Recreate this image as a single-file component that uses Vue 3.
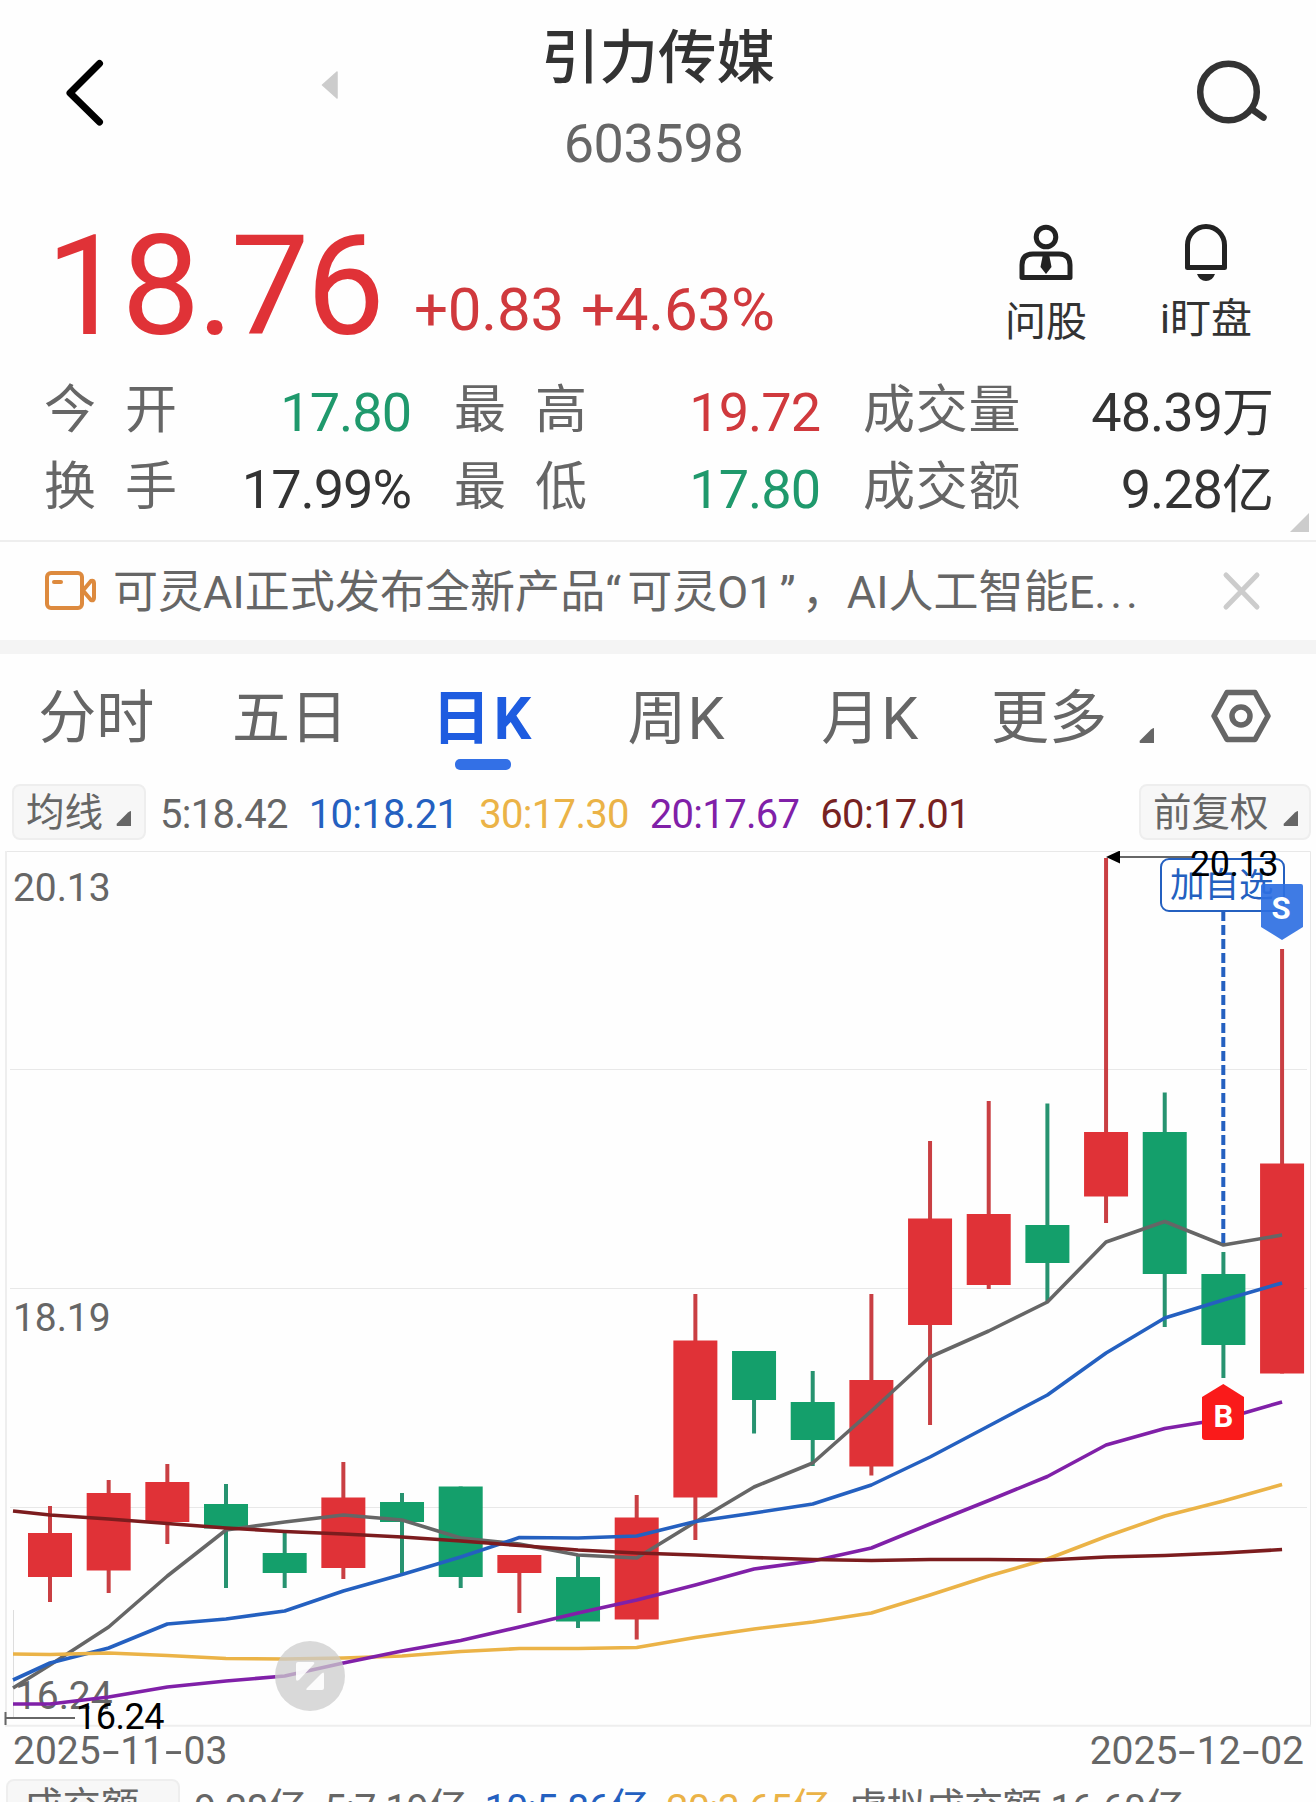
<script setup>
    import { ref } from 'vue';

    const activeTab = ref('日K');
    const tabs = ['分时', '五日', '日K', '周K', '月K'];

    const quotes = [
        { label: '今开', value: '17.80', type: 'down' },
        { label: '最高', value: '19.72', type: 'up' },
        { label: '成交量', value: '48.39', unit: '万' },
        { label: '换手', value: '17.99%' },
        { label: '最低', value: '17.80', type: 'down' },
        { label: '成交额', value: '9.28', unit: '亿' },
    ];

    const averages = [
        { text: '5:18.42', type: 'gray' },
        { text: '10:18.21', type: 'blue' },
        { text: '30:17.30', type: 'yellow' },
        { text: '20:17.67', type: 'purple' },
        { text: '60:17.01', type: 'maroon' },
    ];

    const turnover = [
        { text: '9.28亿', type: 'gray' },
        { text: '5:7.19亿', type: 'gray' },
        { text: '10:5.86亿', type: 'blue' },
        { text: '20:3.65亿', type: 'yellow' },
        { text: '虚拟成交额 16.60亿', type: 'gray' },
    ];

    const dates = ['2025-11-03', '2025-12-02'];

    const STEP = 58.67;
    const xOf = (i) => 50 + i * STEP;

    // [type, high, body top, body bottom, low]
    const candles = [
        ['up', 1506, 1533, 1577, 1602],
        ['up', 1480, 1493, 1570.5, 1593],
        ['up', 1464, 1482, 1522, 1544],
        ['down', 1484, 1504, 1528.5, 1588],
        ['down', 1531, 1553, 1573, 1588],
        ['up', 1462, 1497.5, 1568, 1579],
        ['down', 1493, 1502, 1522, 1573],
        ['down', 1486.5, 1486.5, 1577, 1588],
        ['up', 1555, 1555, 1573, 1613],
        ['down', 1555, 1577, 1621.5, 1628],
        ['up', 1495, 1517.5, 1619.5, 1639.5],
        ['up', 1294, 1340.5, 1497.5, 1540],
        ['down', 1351, 1351, 1400, 1433.5],
        ['down', 1371, 1402, 1440, 1466],
        ['up', 1294, 1380, 1466.5, 1475.5],
        ['up', 1141, 1218.5, 1325, 1425],
        ['up', 1101, 1214, 1285, 1289],
        ['down', 1103.5, 1225, 1263, 1301],
        ['up', 858, 1132, 1196.5, 1223],
        ['down', 1092.5, 1132, 1274, 1327],
        ['down', 1252, 1274, 1345, 1378],
        ['up', 949, 1163.5, 1373.5, 1373.5],
    ];

    // first value is at the left edge of the plot, the rest at the candle centres
    const lines = [
        { type: 'gray', ys: [1688, 1665, 1627, 1576, 1530, 1522, 1515, 1520, 1538, 1544, 1555, 1558, 1522, 1487, 1463, 1411, 1357, 1331, 1302, 1242, 1221.5, 1245, 1235] },
        { type: 'blue', ys: [1680, 1663, 1648, 1624, 1619, 1611, 1591, 1574.5, 1557, 1537.5, 1538, 1536, 1521.5, 1513, 1504, 1485, 1457, 1426, 1395, 1353, 1318, 1300, 1283] },
        { type: 'yellow', ys: [1654, 1654.5, 1653, 1655.5, 1658.5, 1659, 1658, 1656, 1651.5, 1648.5, 1648.5, 1647.5, 1637.5, 1629, 1622, 1613, 1595, 1576, 1559, 1536.5, 1516, 1501, 1484.5] },
        { type: 'purple', ys: [1704, 1704, 1697, 1687, 1681, 1676, 1663, 1651, 1640.5, 1627, 1613, 1600, 1585, 1569, 1561, 1548, 1524, 1500.5, 1476.5, 1445, 1428.5, 1419, 1402] },
        { type: 'maroon', ys: [1511, 1515, 1519, 1523.5, 1528, 1531.5, 1534, 1537, 1541, 1545.5, 1550, 1553, 1555, 1557.5, 1559.5, 1560.5, 1559.5, 1559.5, 1560, 1557, 1555.5, 1553, 1549.5] },
    ];
    const toPoints = (ys) => ys.map((y, i) => `${i === 0 ? 13 : xOf(i - 1)},${y}`).join(' ');
</script>

<template>
    <div class="page">
        <header class="header">
            <div class="header-left">
                <svg class="back" width="40" height="68" viewBox="0 0 40 68">
                    <path d="M35.500 4.500 L6 34 L35.500 63" />
                </svg>
                <svg class="prev" width="18" height="28" viewBox="0 0 18 28">
                    <path d="M16 1 L1.500 14 L16 27 Z" />
                </svg>
            </div>
            <div class="title">
                <div class="name">引力传媒</div>
                <div class="code">603598</div>
            </div>
            <div class="header-right">
                <svg width="74" height="68" viewBox="0 0 74 68">
                    <circle cx="32.500" cy="32" r="28.300" />
                    <path d="M57 50 L67.500 57.500" />
                </svg>
            </div>
        </header>

        <section class="price-row">
            <div class="price">18.76</div>
            <div class="change">+0.83</div>
            <div class="change percent">+4.63%</div>
            <div class="actions">
                <div class="action ask">
                    <svg width="56" height="60" viewBox="0 0 56 60">
                        <circle cx="28" cy="14" r="9.800" />
                        <path d="M4 54.500 V42 Q4 31 15 31 H41 Q52 31 52 42 V54.500 Z" />
                        <path class="solid" d="M25 31 H31 L33.500 44 L28 51 L22.500 44 Z" />
                    </svg>
                    <span>问股</span>
                </div>
                <div class="action watch">
                    <svg width="56" height="60" viewBox="0 0 56 60">
                        <path d="M9.500 44.500 V22 A18.500 18.500 0 0 1 46.500 22 V44.500 Z" />
                        <path class="solid" d="M19 51 H37 Q34.500 58 28 58 Q21.500 58 19 51 Z" />
                    </svg>
                    <span>i盯盘</span>
                </div>
            </div>
        </section>

        <section class="quotes">
            <div v-for="q in quotes" :key="q.label" class="quote">
                <span class="label" :class="{ wide: q.label.length === 2 }">{{ q.label }}</span>
                <span class="value" :class="q.type">{{ q.value }}<span v-if="q.unit" class="unit">{{ q.unit }}</span></span>
            </div>
            <svg class="corner" width="20" height="20" viewBox="0 0 20 20">
                <path d="M19 0 V19 H0 Z" />
            </svg>
        </section>

        <section class="news">
            <svg class="video" width="54" height="42" viewBox="0 0 54 42">
                <rect x="3" y="3" width="35" height="35" rx="4" />
                <path d="M39 20.500 L47 11 Q50 10 50 13 V28 Q50 31 47 30 Z" />
                <path d="M10 12 H17" />
            </svg>
            <span class="news-text">可灵AI正式发布全新产品“<i></i>可灵O1<i></i>”<i></i>，AI人工智能E<b>...</b></span>
            <svg class="close" width="40" height="40" viewBox="0 0 40 40">
                <path d="M4 4 L35 36 M35 4 L4 36" />
            </svg>
        </section>

        <nav class="tabs">
            <div
                v-for="tab in tabs"
                :key="tab"
                class="tab"
                :class="{ active: tab === activeTab, latin: tab.endsWith('K') }"
                @click="activeTab = tab"
            >{{ tab }}</div>
            <div class="more">更多</div>
            <svg class="tri" width="16" height="15" viewBox="0 0 16 15">
                <path d="M15 0 V15 H1 Q0 14 1 12.500 L12 1.500 Q13.500 0 15 0 Z" />
            </svg>
            <svg class="settings" width="60" height="54" viewBox="0 0 60 54">
                <path d="M16 3.500 H44 L57 27 L44 50.500 H16 L3 27 Z" />
                <circle cx="30" cy="27" r="9" />
            </svg>
        </nav>

        <section class="indicator">
            <div class="chip">均线
                <svg width="16" height="15" viewBox="0 0 16 15">
                    <path d="M15 0 V15 H1 Q0 14 1 12.500 L12 1.500 Q13.500 0 15 0 Z" />
                </svg>
            </div>
            <span v-for="a in averages" :key="a.text" class="avg" :class="a.type">{{ a.text }}</span>
            <div class="chip right">前复权
                <svg width="16" height="15" viewBox="0 0 16 15">
                    <path d="M15 0 V15 H1 Q0 14 1 12.500 L12 1.500 Q13.500 0 15 0 Z" />
                </svg>
            </div>
        </section>

        <svg class="chart" width="1316" height="878" viewBox="0 851 1316 878">
            <g class="grid">
                <path d="M5 851.500 H1310.500 V1725" />
                <path class="thick" d="M6 851 V1726 M5 1725.700 H1311" />
                <path d="M10 1069.500 H1307 M10 1288.500 H1307 M10 1507.500 H1307" />
                <path class="faint" d="M13.500 1610 V1718" />
            </g>

            <g v-for="(c, i) in candles" :key="i" :class="c[0]">
                <line class="wick" :x1="xOf(i)" :x2="xOf(i)" :y1="c[1]" :y2="c[4]" />
                <rect :x="xOf(i) - 22" :y="c[2]" width="44" :height="c[3] - c[2]" />
            </g>

            <text class="axis" x="13" y="901">20.13</text>
            <text class="axis" x="13" y="1331">18.19</text>
            <text class="axis" x="15" y="1708.500">16.24</text>

            <polyline v-for="l in lines" :key="l.type" class="ma" :class="l.type" :points="toPoints(l.ys)" />

            <path class="note-line" d="M5.500 1712 V1725 M6 1718 H75" />
            <text class="note" x="76" y="1728.500">16.24</text>

            <rect class="fav-box" x="1161" y="859" width="123" height="52" rx="8" />
            <text class="fav" x="1170" y="896.500">加自选</text>
            <path class="fav-line" d="M1223.300 911 V1243" />
            <path class="note-line" d="M1118 857 H1192" />
            <path d="M1106 857 L1120 850.500 V863.500 Z" />
            <text class="note" x="1190" y="876">20.13</text>

            <path class="sell" d="M1263 884 H1301 Q1303 884 1303 886 V927 L1282 940 L1261 927 V886 Q1261 884 1263 884 Z" />
            <text class="mark" x="1281" y="919">S</text>
            <path class="buy" d="M1223.300 1384 L1244 1397 V1437 Q1244 1440 1241 1440 H1205 Q1202 1440 1202 1437 V1397 Z" />
            <text class="mark" x="1223.300" y="1427">B</text>

            <g class="expand">
                <circle cx="310" cy="1676" r="35" />
                <path d="M298 1662 H313 Q315 1662 314 1664 L299 1680 Q296 1682 296 1679 V1664 Q296 1662 298 1662 Z" />
                <path d="M322 1690 H308 Q305 1690 307 1688 L321 1674 Q324 1671 324 1674 V1688 Q324 1690 322 1690 Z" />
            </g>
        </svg>

        <div class="dates">
            <span v-for="d in dates" :key="d">
                <span v-for="(ch, i) in d" :key="i" :class="{ dash: ch === '-' }">{{ ch }}</span>
            </span>
        </div>

        <section class="indicator turnover">
            <div class="chip">成交额
                <svg width="16" height="15" viewBox="0 0 16 15">
                    <path d="M15 0 V15 H1 Q0 14 1 12.500 L12 1.500 Q13.500 0 15 0 Z" />
                </svg>
            </div>
            <span v-for="t in turnover" :key="t.text" class="avg" :class="t.type">{{ t.text }}</span>
        </section>
    </div>
</template>

<style>
    body {
        background: #fefefe;
    }
</style>

<style scoped>
    .page {
        width: 1316px;
        height: 1802px;
        overflow: hidden;
        background: #fefefe;
        color: #333;
        font-family: Roboto, "Noto Sans CJK SC", sans-serif;
        white-space: nowrap;
    }

    svg {
        display: block;
        flex: none;
    }

    .header {
        display: grid;
        grid-template-columns: 1fr auto 1fr;
        height: 190px;
    }

    .header-left {
        display: flex;
        padding-left: 64px;
    }

    .back {
        margin-top: 59px;
        fill: none;
        stroke: #000;
        stroke-width: 7;
        stroke-linecap: round;
        stroke-linejoin: round;
    }

    .prev {
        margin: 71px 0 0 217px;
        fill: #ccc;
        stroke: #ccc;
        stroke-width: 1.5;
        stroke-linejoin: round;
    }

    .title {
        padding-top: 23px;
        text-align: center;
    }

    .name {
        font-size: 58.5px;
        font-weight: 500;
        line-height: 70px;
    }

    .code {
        margin: 21px 0 0 -9px;
        font-size: 54px;
        line-height: 60px;
        letter-spacing: -0.4px;
        color: #666;
    }

    .header-right {
        display: flex;
        justify-content: flex-end;
        padding: 60px 46px 0 0;
        fill: none;
        stroke: #333;
        stroke-width: 6.5;
        stroke-linecap: round;
    }

    .price-row {
        display: flex;
        align-items: baseline;
        height: 184px;
        box-sizing: border-box;
        padding: 26px 0 0 46px;
        color: #e03237;
    }

    .price {
        width: 368px;
        font-size: 140px;
        line-height: 140px;
        letter-spacing: -3.2px;
    }

    .change {
        width: 167px;
        padding-bottom: 4px;
        font-size: 60px;
        line-height: 70px;
        letter-spacing: -0.2px;
        color: #d0393d;
        transform: translateY(-4px);
    }

    .percent {
        width: auto;
    }

    .actions {
        display: flex;
        align-self: flex-start;
        margin: 7px 64px 0 auto;
        color: #333;
    }

    .action {
        display: flex;
        flex-direction: column;
        align-items: center;
        font-size: 41px;
        line-height: 44px;
    }

    .action svg {
        fill: none;
        stroke: #222;
        stroke-width: 5;
        stroke-linejoin: round;
    }

    .action .solid {
        fill: #222;
        stroke: none;
    }

    .ask {
        margin-right: 73px;
    }

    .ask span {
        padding-top: 17px;
    }

    .watch span {
        padding-top: 14px;
    }

    .quotes {
        position: relative;
        display: grid;
        grid-template-columns: 366px 365px 409px;
        grid-auto-rows: 77px;
        column-gap: 44px;
        height: 166px;
        padding-left: 44px;
        border-bottom: 2px solid #eee;
    }

    .quote {
        display: flex;
        justify-content: space-between;
        align-items: flex-start;
        line-height: 77px;
    }

    .label {
        font-size: 52px;
        line-height: 73px;
        letter-spacing: 0.7px;
        color: #666;
    }

    .label.wide {
        letter-spacing: 29px;
    }

    .value {
        margin-right: -1px;
        font-size: 54px;
        letter-spacing: -1px;
    }

    .unit {
        font-size: 52px;
    }

    .up {
        color: #d0393d;
        fill: #e03237;
        stroke: #c93f43;
    }

    .down {
        color: #1f996c;
        fill: #149f6b;
        stroke: #279370;
    }

    .corner {
        position: absolute;
        right: 6px;
        bottom: 7px;
        fill: #ccc;
    }

    .news {
        display: flex;
        align-items: center;
        height: 98px;
        padding: 0 54px 0 44px;
        border-bottom: 14px solid #f4f4f4;
    }

    .video {
        fill: none;
        stroke: #dd8a3e;
        stroke-width: 4;
        stroke-linecap: round;
    }

    .news-text {
        flex: 1;
        margin-left: 15px;
        padding-top: 3px;
        font-size: 45px;
        line-height: 60px;
        letter-spacing: 0.05px;
        color: #666;
    }

    .news-text i {
        display: inline-block;
        width: 6px;
    }

    .news-text b {
        font-weight: 400;
        letter-spacing: 4px;
    }

    .close {
        fill: none;
        stroke: #ccc;
        stroke-width: 5;
        stroke-linecap: round;
    }

    .tabs {
        display: flex;
        height: 130px;
        font-size: 58px;
        line-height: 129px;
        color: #666;
    }

    .tab {
        position: relative;
        width: 193.6px;
        text-align: center;
        text-indent: -1px;
    }

    .tab.latin {
        font-size: 59px;
        letter-spacing: 1px;
        text-indent: -2px;
    }

    .tab.active {
        font-weight: 700;
        letter-spacing: 3px;
        color: #1e5ce0;
    }

    .tab.active::after {
        content: "";
        position: absolute;
        left: 68px;
        top: 105px;
        width: 56px;
        height: 11px;
        border-radius: 5px;
        background: #3370e6;
    }

    .more {
        margin-left: 23px;
    }

    .tri {
        margin: 74px 0 0 32px;
        fill: #666;
    }

    .settings {
        margin: 35px 0 0 56px;
        fill: none;
        stroke: #666;
        stroke-width: 5.5;
        stroke-linejoin: round;
    }

    .indicator {
        display: flex;
        height: 67px;
        padding: 0 5px 0 12px;
        font-size: 40px;
        line-height: 62px;
    }

    .chip {
        display: flex;
        justify-content: space-between;
        box-sizing: border-box;
        width: 134px;
        height: 56px;
        margin-right: 14px;
        padding: 0 12px;
        border: 2px solid #eee;
        border-radius: 8px;
        background: #f7f7f7;
        font-size: 38.5px;
        line-height: 54px;
        color: #666;
    }

    .chip svg {
        margin-top: 25px;
        fill: #666;
    }

    .chip.right {
        width: 172px;
        margin: 0 0 0 auto;
        padding: 0 10px 0 12px;
    }

    .avg {
        margin-right: 21px;
        letter-spacing: -0.7px;
        fill: none;
    }

    .gray {
        color: #666;
        stroke: #666;
    }

    .blue {
        color: #2460c0;
        stroke: #2460c0;
    }

    .yellow {
        color: #ebb347;
        stroke: #ebb347;
    }

    .purple {
        color: #8020a8;
        stroke: #8020a8;
    }

    .maroon {
        color: #772222;
        stroke: #7c1c1e;
    }

    .chart {
        font-size: 39px;
    }

    .grid {
        fill: none;
        stroke: #e8e8e8;
        stroke-width: 1;
    }

    .grid .thick {
        stroke: #eee;
        stroke-width: 2;
    }

    .grid .faint {
        stroke: #ddd;
    }

    .wick {
        stroke-width: 4;
    }

    .chart rect {
        stroke: none;
    }

    .ma {
        fill: none;
        stroke-width: 3.6;
        stroke-linejoin: round;
    }

    .axis {
        fill: #666;
        letter-spacing: -0.1px;
    }

    .note {
        font-size: 36px;
        letter-spacing: -0.5px;
        fill: #000;
    }

    .note-line {
        fill: none;
        stroke: #666;
        stroke-width: 2;
    }

    .chart .fav-box {
        fill: #fff;
        stroke: #2460c0;
        stroke-width: 2;
    }

    .fav {
        font-size: 34.5px;
        fill: #2460c0;
    }

    .fav-line {
        stroke: #2460c0;
        stroke-width: 4;
        stroke-dasharray: 10 4;
    }

    .sell {
        fill: #2f70e2;
        opacity: 0.92;
    }

    .buy {
        fill: #fa1a1a;
    }

    .mark {
        font-size: 31px;
        font-weight: 700;
        text-anchor: middle;
        fill: #fff;
    }

    .expand circle {
        fill: #ccc;
        opacity: 0.75;
    }

    .expand path {
        fill: #fff;
        opacity: 0.9;
    }

    .dates {
        display: flex;
        justify-content: space-between;
        padding: 0 12px 0 13px;
        font-size: 39px;
        line-height: 45px;
        color: #666;
    }

    .dash {
        display: inline-block;
        width: 19.5px;
        text-align: center;
        transform: scaleX(1.6);
    }

    .turnover {
        margin-top: 5px;
        padding-left: 6px;
        line-height: 60px;
    }

    .turnover .chip {
        width: 174px;
        padding: 0 16px;
        line-height: 52px;
    }

    .turnover .avg {
        margin-right: 18px;
        font-size: 39.5px;
        letter-spacing: -0.85px;
    }
</style>
